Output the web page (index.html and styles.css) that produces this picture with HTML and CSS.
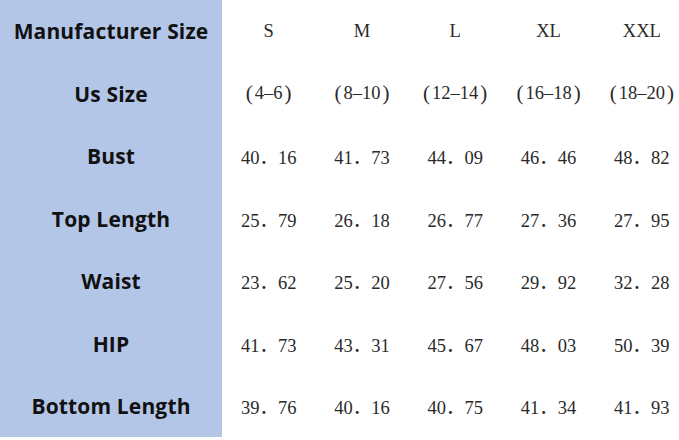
FILE: index.html
```html
<!DOCTYPE html>
<html>
<head>
<meta charset="utf-8">
<link rel="stylesheet" href="styles.css">
</head>
<body>
<div class="chart">
  <div class="labels">
    <div class="label">Manufacturer Size</div>
    <div class="label">Us Size</div>
    <div class="label">Bust</div>
    <div class="label">Top Length</div>
    <div class="label">Waist</div>
    <div class="label">HIP</div>
    <div class="label">Bottom Length</div>
  </div>
  <div class="values">
    <div class="v">S</div><div class="v">M</div><div class="v">L</div><div class="v">XL</div><div class="v">XXL</div>
    <div class="v"><span class="pr">(</span>4–6<span class="pr">)</span></div>
    <div class="v"><span class="pr">(</span>8–10<span class="pr">)</span></div>
    <div class="v"><span class="pr">(</span>12–14<span class="pr">)</span></div>
    <div class="v"><span class="pr">(</span>16–18<span class="pr">)</span></div>
    <div class="v"><span class="pr">(</span>18–20<span class="pr">)</span></div>
    <div class="v">40．16</div><div class="v">41．73</div><div class="v">44．09</div><div class="v">46．46</div><div class="v">48．82</div>
    <div class="v">25．79</div><div class="v">26．18</div><div class="v">26．77</div><div class="v">27．36</div><div class="v">27．95</div>
    <div class="v">23．62</div><div class="v">25．20</div><div class="v">27．56</div><div class="v">29．92</div><div class="v">32．28</div>
    <div class="v">41．73</div><div class="v">43．31</div><div class="v">45．67</div><div class="v">48．03</div><div class="v">50．39</div>
    <div class="v">39．76</div><div class="v">40．16</div><div class="v">40．75</div><div class="v">41．34</div><div class="v">41．93</div>
  </div>
</div>
</body>
</html>
```
FILE: styles.css
```css
html, body {
  margin: 0;
  padding: 0;
  background: #ffffff;
  overflow: hidden;
}
.chart {
  display: flex;
  width: 690px;
  height: 440px;
}
.labels {
  width: 222px;
  height: 437px;
  background: #b4c6e8;
  display: grid;
  grid-template-rows: repeat(7, 62.5px);
  flex: none;
}
.label {
  display: flex;
  align-items: center;
  justify-content: center;
  font-family: "Open Sans", "Noto Sans", sans-serif;
  font-weight: 700;
  font-size: 21px;
  letter-spacing: 0.15px;
  color: #111111;
}
.values {
  flex: none;
  width: 467px;
  display: grid;
  grid-template-columns: repeat(5, 93.3px);
  grid-template-rows: repeat(7, 62.5px);
}
.v {
  display: flex;
  align-items: center;
  justify-content: center;
  font-family: "Liberation Serif", "Noto Sans CJK SC", serif;
  font-size: 18.5px;
  color: #2a2a2a;
  white-space: nowrap;
}
.pr {
  font-size: 21px;
  margin: 0 2px;
}
```
